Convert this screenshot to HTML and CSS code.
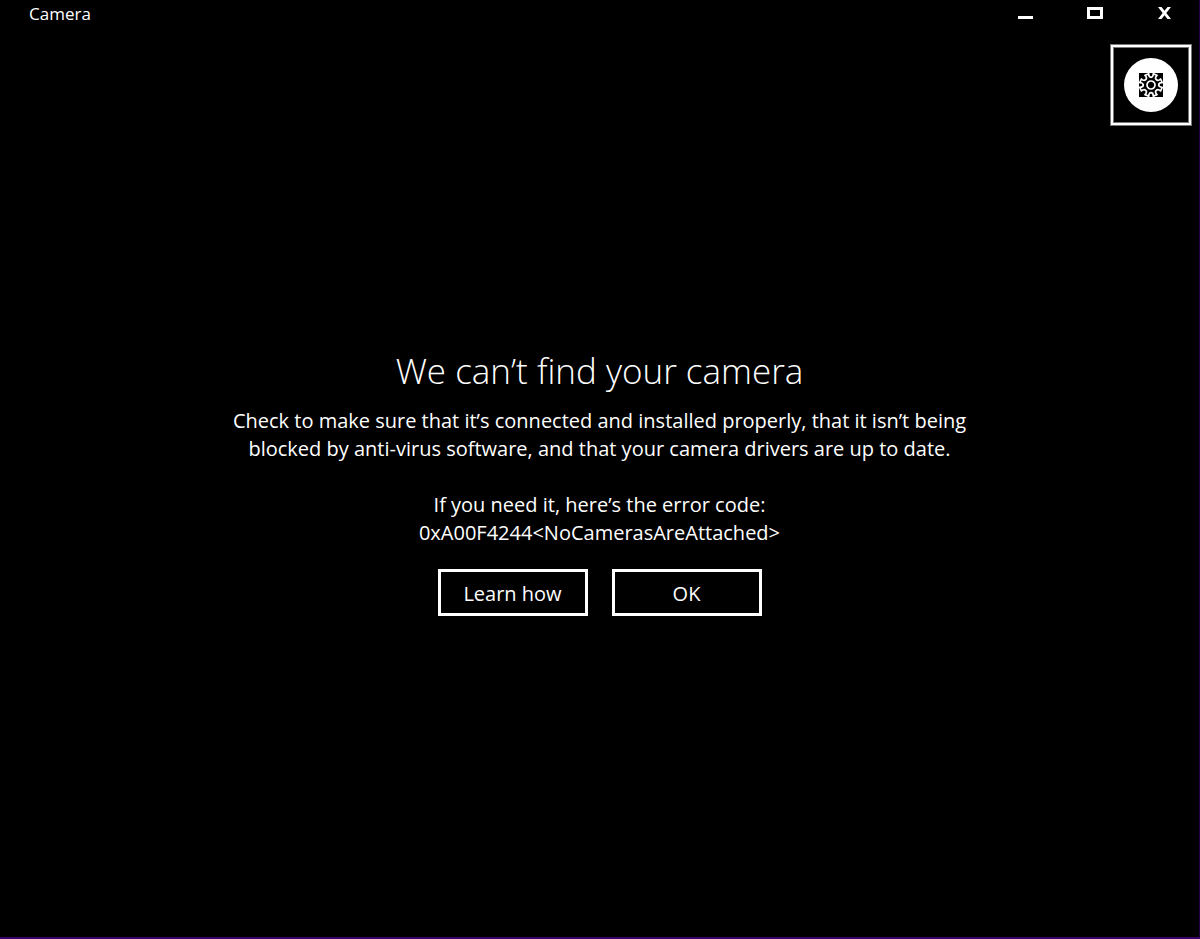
FILE: index.html
```html
<!DOCTYPE html>
<html lang="en">
<head>
    <meta charset="UTF-8">
    <meta name="viewport" content="width=device-width, initial-scale=1.0">
    <title>Camera</title>
    <link rel="stylesheet" href="styles.css">
</head>
<body>
    <div class="window">
        <header class="titlebar">
            <span class="app-name">Camera</span>
            <div class="window-controls">
                <button class="window-btn" type="button" aria-label="Minimize">
                    <svg width="69" height="26" viewBox="0 0 69 26" shape-rendering="crispEdges"><rect x="26" y="16" width="15" height="3" fill="#fff"/></svg>
                </button>
                <button class="window-btn" type="button" aria-label="Maximize">
                    <svg width="69" height="26" viewBox="0 0 69 26" shape-rendering="crispEdges"><path d="M26 7h16v12H26zM29 10v6h10v-6z" fill="#fff" fill-rule="evenodd"/></svg>
                </button>
                <button class="window-btn" type="button" aria-label="Close">
                    <svg width="69" height="26" viewBox="0 0 69 26"><path d="M28 7h3.500l3 3.700L37.500 7H41l-4.700 6L41 19h-3.500l-3-3.700L31.500 19H28l4.700-6z" fill="#fff"/></svg>
                </button>
            </div>
        </header>

        <div class="toolbar">
            <button class="settings-btn" type="button" aria-label="Settings">
                <span class="settings-circle">
                    <svg width="24" height="24" viewBox="-12 -12 24 24">
                        <rect x="-12" y="-12" width="24" height="24" fill="#000"/>
                        <g fill="none" stroke="#fff" stroke-width="1.7" stroke-linejoin="round">
                            <path d="M2.300-11.200L6-9.600A2.500 3.500 45 0 0 9.600-6L11.200-2.300A2.300 3.500 90 0 0 11.200 2.300L9.600 6A2.500 3.500 135 0 0 6 9.600L2.300 11.200A2.300 3.500 0 0 0-2.300 11.200L-6 9.600A2.500 3.500 45 0 0-9.600 6L-11.200 2.300A2.300 3.500 90 0 0-11.200-2.300L-9.600-6A2.500 3.500 135 0 0-6-9.600L-2.300-11.200A2.300 3.500 0 0 0 2.300-11.200z"/>
                            <circle r="4"/>
                        </g>
                    </svg>
                </span>
            </button>
        </div>

        <main class="message">
            <h1 class="message-title">We can’t find your camera</h1>
            <p class="message-text">Check to make sure that it’s connected and installed properly, that it isn’t being blocked by anti-virus software, and that your camera drivers are up to date.</p>
            <p class="message-text">If you need it, here’s the error code:<br>0xA00F4244&lt;NoCamerasAreAttached&gt;</p>
            <div class="actions">
                <button class="action-btn" type="button">Learn how</button>
                <button class="action-btn" type="button">OK</button>
            </div>
        </main>
    </div>
</body>
</html>
```
FILE: styles.css
```css
* {
    margin: 0;
    padding: 0;
    box-sizing: border-box;
}

body {
    background-color: #000;
    color: #fff;
    font-family: 'Segoe UI', 'Open Sans', 'Noto Sans', sans-serif;
}

.window {
    min-height: 100vh;
    display: flex;
    flex-direction: column;
    border-right: 1px solid #240046;
    border-bottom: 2px solid #3a0068;
}

/* Title bar */
.titlebar {
    display: flex;
    justify-content: space-between;
    height: 28px;
    padding-left: 29px;
}

.app-name {
    font-size: 17px;
    line-height: 28px;
}

.window-controls {
    display: flex;
}

.window-btn {
    display: flex;
    width: 69px;
    background: none;
    border: none;
}

/* Settings */
.toolbar {
    display: flex;
    justify-content: flex-end;
    padding: 17px 8px;
}

.settings-btn {
    display: flex;
    justify-content: center;
    align-items: center;
    width: 80px;
    height: 80px;
    background: #000;
    border: 2px solid #fff;
    box-shadow: 0 0 0 1px #777, inset 0 0 0 1px #777;
}

.settings-circle {
    display: flex;
    justify-content: center;
    align-items: center;
    width: 54px;
    height: 54px;
    border-radius: 50%;
    background: #fff;
}

/* Error message */
.message {
    flex: 1;
    display: flex;
    flex-direction: column;
    align-items: center;
    width: 100%;
    max-width: 768px;
    margin: 0 auto;
    padding-top: 205px;
    text-align: center;
}

.message-title {
    font-size: 35px;
    font-weight: 300;
    line-height: 48px;
    margin-bottom: 12px;
}

.message-text {
    font-size: 20px;
    line-height: 28px;
    margin-bottom: 28px;
}

.actions {
    display: flex;
    gap: 24px;
    margin-top: -6px;
}

.action-btn {
    width: 150px;
    height: 47px;
    padding-top: 1px;
    background: #000;
    border: 3px solid #fff;
    color: #fff;
    font-family: inherit;
    font-size: 20px;
}
```
